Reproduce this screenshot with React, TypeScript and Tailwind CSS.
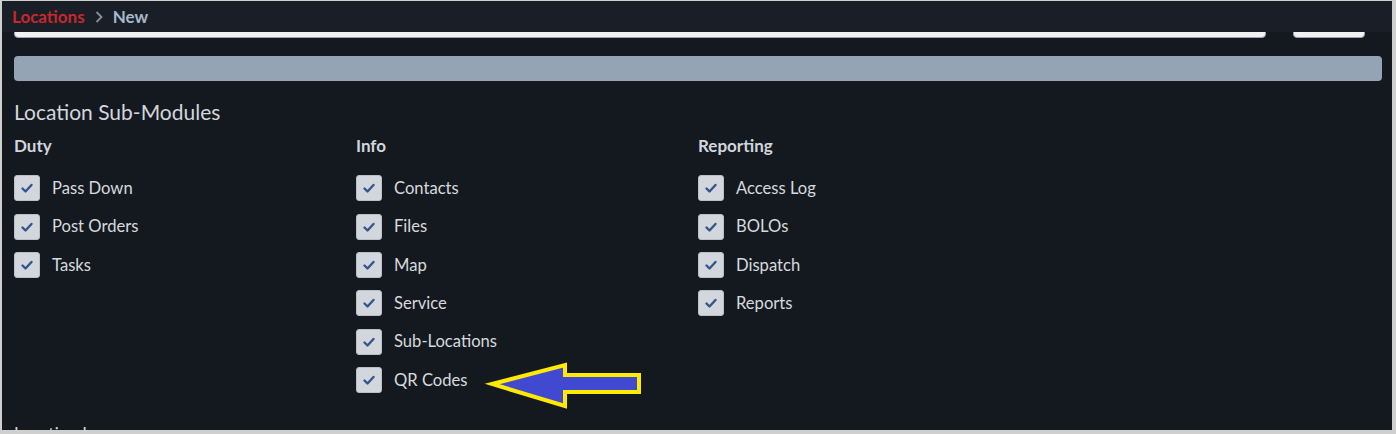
import React from 'react';

type Group = { title: string; items: string[] };

const groups: Group[] = [
  { title: 'Duty', items: ['Pass Down', 'Post Orders', 'Tasks'] },
  { title: 'Info', items: ['Contacts', 'Files', 'Map', 'Service', 'Sub-Locations', 'QR Codes'] },
  { title: 'Reporting', items: ['Access Log', 'BOLOs', 'Dispatch', 'Reports'] },
];

const CheckRow: React.FC<{ label: string }> = ({ label }) => (
  <label className="flex items-center gap-[12px] h-[38.4px]">
    <span className="w-[26px] h-[26px] rounded-[3px] bg-[#d3d7dd] border border-[#b9bfc7] flex items-center justify-center">
      <svg width="14" height="12" viewBox="0 0 14 12" fill="none">
        <path d="M2.5 6.5 L5.5 9.5 L11.5 3" stroke="#34568a" strokeWidth="2.4" strokeLinecap="round" strokeLinejoin="round" />
      </svg>
    </span>
    <span className="text-[16.6px] text-[#d6dade]">{label}</span>
  </label>
);

const App: React.FC = () => {
  return (
    <div className="w-[1396px] h-[434px] bg-[#cfcfcf] pl-[2px] pt-[1px] pr-[4px] pb-[4px]" style={{ fontFamily: 'Lato, "Noto Sans", sans-serif' }}>
      <div className="relative w-full h-full bg-[#141920] overflow-hidden">
        {/* sticky breadcrumb */}
        <div className="absolute top-0 left-0 right-0 h-[31px] bg-[#1a1f27] z-10 flex items-center pl-[10px] gap-[9px] text-[17px] font-bold">
          <span className="text-[#c5282e]">Locations</span>
          <svg width="10" height="14" viewBox="0 0 10 14" fill="none">
            <path d="M2.5 2 L7.5 7 L2.5 12" stroke="#8a8f96" strokeWidth="1.8" />
          </svg>
          <span className="text-[#a7b9ca]">New</span>
        </div>

        <div className="px-[12px] pt-[3px]">
          {/* scrolled-away inputs */}
          <div className="flex gap-[27px] pr-[15px]">
            <div className="flex-1 h-[34px] rounded-[4px] bg-[#f2f2f2] border border-[#9aa3ad]" />
            <div className="w-[72px] h-[34px] rounded-[4px] bg-[#f2f2f2] border border-[#9aa3ad]" />
          </div>

          <div className="mt-[18px] -mr-[2px] h-[25px] rounded-[4px] bg-[#94a4b4]" />

          <h2 className="mt-[19px] text-[21px] leading-[24px] text-[#d2d6dc]">Location Sub-Modules</h2>

          <div className="grid grid-cols-[342px_342px_342px] mt-[12px]">
            {groups.map((g) => (
              <div key={g.title}>
                <div className="text-[17px] font-bold leading-[20px] text-[#d2d6dc]">{g.title}</div>
                <div className="mt-[13px] flex flex-col">
                  {g.items.map((it) => (
                    <CheckRow key={it} label={it} />
                  ))}
                </div>
              </div>
            ))}
          </div>

          <div className="mt-[25px] text-[17px] leading-[20px] text-[#d2d6dc]">Location Image</div>
        </div>

        {/* annotation arrow */}
        <svg className="absolute left-[480px] top-[355px]" width="170" height="60" viewBox="480 355 170 60">
          <polygon
            points="490,383 563,364 563,374 637,374 637,391 563,391 563,405"
            fill="#4049cf"
            stroke="#ffea00"
            strokeWidth="4"
            strokeLinejoin="miter"
          />
        </svg>
      </div>
    </div>
  );
};

export default App;
